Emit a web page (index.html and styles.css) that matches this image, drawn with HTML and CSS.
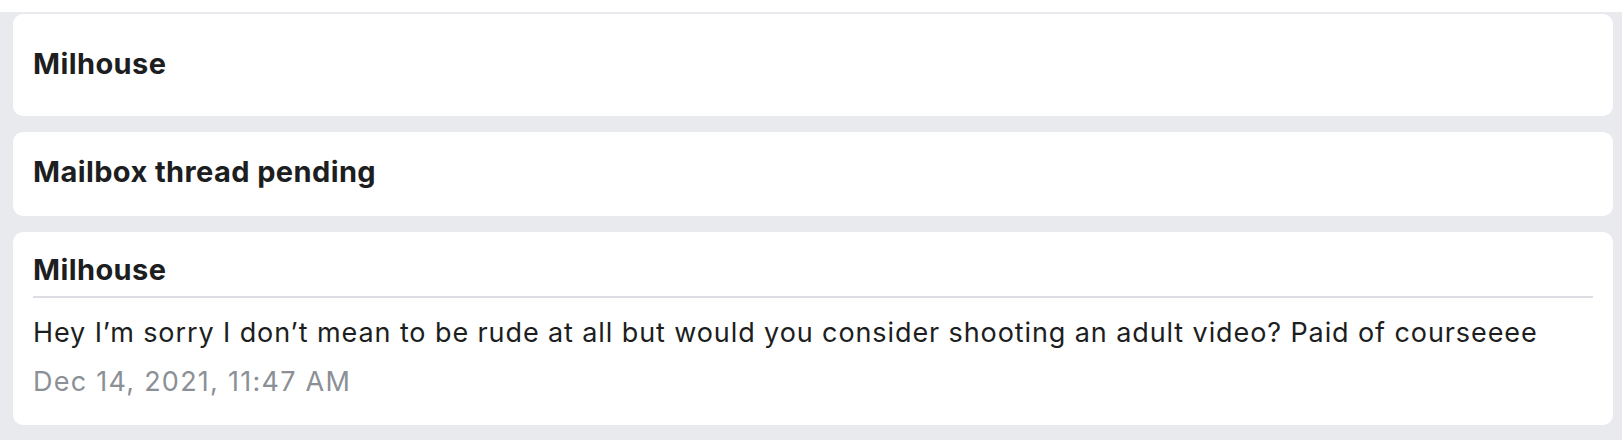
FILE: index.html
```html
<!DOCTYPE html>
<html lang="en">
<head>
<meta charset="utf-8">
<title>Messages</title>
<link rel="stylesheet" href="styles.css">
</head>
<body>
<div class="topbar"></div>
<main class="feed">
  <section class="card card--tall">
    <h2 class="card__title">Milhouse</h2>
  </section>
  <section class="card card--short">
    <h2 class="card__title">Mailbox thread pending</h2>
  </section>
  <section class="card card--message">
    <h2 class="card__title card__title--ruled">Milhouse</h2>
    <p class="card__text">Hey I’m sorry I don’t mean to be rude at all but would you consider shooting an adult video? Paid of courseeee</p>
    <p class="card__date">Dec 14, 2021, 11:47 AM</p>
  </section>
</main>
</body>
</html>
```

FILE: styles.css
```css
* { box-sizing: border-box; }
html, body {
  margin: 0;
  padding: 0;
  background: #e9eaee;
  font-family: Inter, "Noto Sans", sans-serif;
  color: #1c1e21;
}
.topbar {
  height: 12px;
  background: #ffffff;
}
.feed {
  display: flex;
  flex-direction: column;
  gap: 16px;
  padding: 2px 9px 17px 13px;
}
.card {
  background: #ffffff;
  border-radius: 10px;
  padding: 20px 20px;
}
.card--tall { padding: 32px 20px 34px; }
.card--short { padding: 22px 20px 26px; }
.card--message { padding: 20px 20px 27px; }
.card__title {
  margin: 0;
  font-size: 29px;
  line-height: 36px;
  font-weight: 700;
  letter-spacing: 0.4px;
}
.card__title--ruled {
  padding-bottom: 8px;
  border-bottom: 2px solid #dcdde2;
}
.card__text {
  margin: 19px 0 0;
  font-size: 27px;
  line-height: 32px;
  letter-spacing: 0.9px;
}
.card__date {
  margin: 17px 0 0;
  font-size: 27px;
  line-height: 32px;
  letter-spacing: 1.25px;
  color: #8b8f96;
}
```
